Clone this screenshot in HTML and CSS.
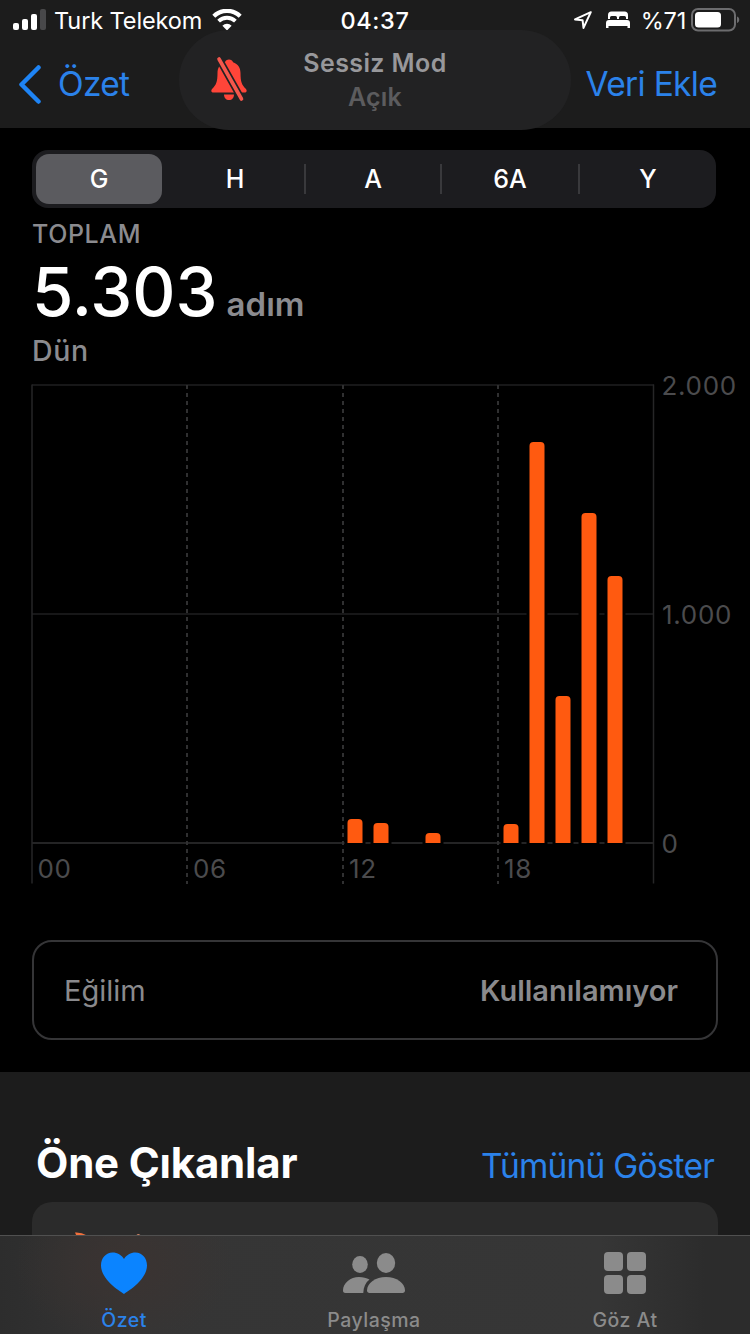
FILE: index.html
```
<!DOCTYPE html>
<html lang="tr">
<head>
    <meta charset="UTF-8">
    <meta name="viewport" content="width=device-width, initial-scale=1.0">
    <title>Adım Sayısı</title>
    <link rel="stylesheet" href="styles.css">
</head>
<body>
    <header class="header">
        <div class="status-bar">
            <div class="status-left">
                <svg class="signal" width="34" height="22" viewBox="0 0 34 22">
                    <rect x="1" y="14" width="6" height="7" rx="2" fill="#fff"/>
                    <rect x="10" y="10" width="6" height="11" rx="2" fill="#fff"/>
                    <rect x="19" y="5" width="6" height="16" rx="2" fill="#fff"/>
                    <rect x="28" y="0" width="6" height="21" rx="2" fill="#48484a"/>
                </svg>
                <span class="carrier">Turk Telekom</span>
                <svg class="wifi" width="30" height="22" viewBox="0 0 30 22">
                    <path d="M1.8 7.2a18.8 18.8 0 0 1 26.4 0" fill="none" stroke="#fff" stroke-width="4.200"/>
                    <path d="M6.6 12.2a12 12 0 0 1 16.8 0" fill="none" stroke="#fff" stroke-width="3.8"/>
                    <path d="M15 21.5l-4.6-4.7a6.4 6.4 0 0 1 9.2 0z" fill="#fff"/>
                </svg>
            </div>
            <span class="clock">04:37</span>
            <div class="status-right">
                <svg width="20" height="20" viewBox="0 0 20 20">
                    <path d="M17.8 2.2L2 9.4l7.6.9.9 7.6z" fill="none" stroke="#fff" stroke-width="2" stroke-linejoin="round"/>
                </svg>
                <svg class="bed" width="26" height="18" viewBox="0 0 26 18">
                    <path d="M3 8V4a3.500 3.500 0 0 1 3.500-3.500h13A3.500 3.500 0 0 1 23 4v4h-2V6.500A1.500 1.500 0 0 0 19.500 5h-4A1.500 1.500 0 0 0 14 6.500V8h-2V6.500A1.500 1.500 0 0 0 10.500 5h-4A1.500 1.500 0 0 0 5 6.500V8z" fill="#fff"/>
                    <path d="M1 17v-5a3 3 0 0 1 3-3h18a3 3 0 0 1 3 3v5h-2.500v-2h-19v2z" fill="#fff"/>
                </svg>
                <span class="percent">%71</span>
                <svg class="battery" width="49" height="24" viewBox="0 0 49 24">
                    <rect x="1" y="1" width="43" height="21.500" rx="6" fill="none" stroke="#6c6c6e" stroke-width="2"/>
                    <rect x="4" y="4" width="26" height="15.500" rx="3.500" fill="#fff"/>
                    <path d="M46 8.500c3 1 3 5.500 0 6.500z" fill="#6c6c6e"/>
                </svg>
            </div>
        </div>
        <nav class="nav">
            <a class="back">
                <svg width="24" height="40" viewBox="0 0 24 40">
                    <path d="M20.500 3.500L3.500 20.500l17 17" fill="none" stroke="#1e84f5" stroke-width="4.500" stroke-linecap="round" stroke-linejoin="round"/>
                </svg>
                <span>Özet</span>
            </a>
            <a class="add">Veri Ekle</a>
        </nav>
        <div class="banner">
            <svg class="bell" width="38" height="46" viewBox="0 0 38 46">
                <path d="M19 3.500c2 0 3.500 1 4 2.700 5 1.700 7.500 5.500 7.500 10.800 0 9 1.500 12 5 15.500 2 2 1.300 4-1 4H3.500c-2.300 0-3-2-1-4C6 29 7.500 26 7.500 17c0-5.300 2.500-9.100 7.500-10.800.5-1.700 2-2.700 4-2.700z" fill="#ff4539"/>
                <path d="M14 38.500h10c0 3.500-2 5.500-5 5.500s-5-2-5-5.500z" fill="#ff4539"/>
                <path d="M9 3l22.500 40" stroke="#222223" stroke-width="7"/>
                <path d="M9 3l22.500 40" stroke="#f4574c" stroke-width="3.600" stroke-linecap="round"/>
            </svg>
            <div class="banner-text">
                <div class="banner-title">Sessiz Mod</div>
                <div class="banner-state">Açık</div>
            </div>
        </div>
    </header>

    <main class="content">
        <div class="segments">
            <span class="segment active">G</span>
            <span class="segment second">H</span>
            <span class="segment divided">A</span>
            <span class="segment divided">6A</span>
            <span class="segment divided last">Y</span>
        </div>

        <section class="summary">
            <div class="summary-label">TOPLAM</div>
            <div class="summary-value"><span class="number">5.303</span><span class="unit">adım</span></div>
            <div class="summary-date">Dün</div>
        </section>

        <svg class="chart" width="750" height="520" viewBox="0 0 750 520">
            <g class="grid">
                <path d="M32 15h622M32 244h622"/>
                <path class="axis" d="M32 473h622"/>
                <path class="edge" d="M32 14.500v499M653.500 14.500v499"/>
                <path class="dashed" d="M187 15v499M343 15v499M498 15v499"/>
            </g>
            <g class="bars">
                <path d="M347.500 473v-20q0-4 4-4h7q4 0 4 4v20z"/>
                <path d="M373.500 473v-16q0-4 4-4h7q4 0 4 4v16z"/>
                <path d="M425.500 473v-6q0-4 4-4h7q4 0 4 4v6z"/>
                <path d="M503.500 473v-15q0-4 4-4h7q4 0 4 4v15z"/>
                <path d="M529.500 473v-397q0-4 4-4h7q4 0 4 4v397z"/>
                <path d="M555.500 473v-143q0-4 4-4h7q4 0 4 4v143z"/>
                <path d="M581.500 473v-326q0-4 4-4h7q4 0 4 4v326z"/>
                <path d="M607.500 473v-263q0-4 4-4h7q4 0 4 4v263z"/>
            </g>
            <g class="labels">
                <text x="661.500" y="25">2.000</text>
                <text x="662" y="254">1.000</text>
                <text x="661.500" y="483">0</text>
                <text x="37.500" y="508">00</text>
                <text x="193" y="508">06</text>
                <text x="349" y="508">12</text>
                <text x="504" y="508">18</text>
            </g>
        </svg>

        <div class="trend">
            <span class="trend-label">Eğilim</span>
            <span class="trend-value">Kullanılamıyor</span>
        </div>
    </main>

    <section class="highlights">
        <div class="highlights-head">
            <h2>Öne Çıkanlar</h2>
            <a class="show-all">Tümünü Göster</a>
        </div>
        <div class="card">
            <svg width="80" height="12" viewBox="0 0 80 12">
                <path d="M2 0.500q6-.5 12 3l1 4H5z" fill="#f2703c"/>
                <path d="M63 3.500q2-3 5 0v3h-5z" fill="#d98a68"/>
            </svg>
        </div>
    </section>

    <footer class="tab-bar">
        <a class="tab selected">
            <svg width="48" height="44" viewBox="0 0 48 44">
                <path d="M24 43C19 39.500 1 28.500 1 14.500 1 7 6 1.500 12.500 1.500c5 0 9 2.500 11.500 6.500 2.500-4 6.500-6.500 11.500-6.500C42 1.500 47 7 47 14.500 47 28.500 29 39.500 24 43z" fill="#0b84ff"/>
            </svg>
            <span>Özet</span>
        </a>
        <a class="tab">
            <svg width="64" height="44" viewBox="0 0 64 44">
                <ellipse cx="18" cy="13.500" rx="7.800" ry="8.500"/>
                <ellipse cx="44" cy="12" rx="9.200" ry="10"/>
                <path d="M1 39.500C1 32 8.500 26 17 26c4 0 7.500 1 10.500 2.500-4 3-6 7.500-6.200 13.500H3.500C1.500 42 1 41 1 39.500z"/>
                <path d="M25 39.500C25 32 33.500 26 44 26s19 6 19 13.500c0 1.500-1 2.500-2.500 2.500h-33c-1.500 0-2.500-1-2.500-2.500z"/>
            </svg>
            <span>Paylaşma</span>
        </a>
        <a class="tab">
            <svg width="42" height="44" viewBox="0 0 42 44">
                <rect x="0" y="1" width="19" height="19" rx="4"/>
                <rect x="23" y="1" width="19" height="19" rx="4"/>
                <rect x="0" y="24" width="19" height="19" rx="4"/>
                <rect x="23" y="24" width="19" height="19" rx="4"/>
            </svg>
            <span>Göz At</span>
        </a>
    </footer>
</body>
</html>
```
FILE: styles.css
```
body {
    margin: 0;
    height: 1334px;
    overflow: hidden;
    background-color: #000;
    color: #fff;
    font-family: Inter, 'Liberation Sans', sans-serif;
}

svg {
    display: block;
    flex: none;
}

.header {
    position: relative;
    height: 128px;
    background-color: #1c1c1c;
}

.status-bar {
    display: grid;
    grid-template-columns: 1fr auto 1fr;
    align-items: center;
    height: 40px;
    padding: 0 12px;
    font-size: 23.5px;
}

.status-left,
.status-right {
    display: flex;
    align-items: center;
}

.status-right {
    justify-content: flex-end;
}

.carrier,
.clock,
.percent {
    padding-top: 1px;
}

.carrier {
    margin: 0 10px 0 8px;
    letter-spacing: -0.1px;
}

.clock {
    font-weight: 500;
    letter-spacing: 0.6px;
}

.percent {
    letter-spacing: -0.2px;
}

.bed {
    margin: 0 10px 0 12px;
}

.battery {
    margin: 0 -2px 0 5px;
}

.nav {
    display: flex;
    justify-content: space-between;
    align-items: center;
    height: 88px;
    padding: 0 33px 0 18px;
    color: #2b82ea;
    font-size: 33.5px;
    letter-spacing: -0.7px;
}

.back {
    display: flex;
    align-items: center;
    gap: 16px;
}

/* Silent mode notification over the header */
.banner {
    position: absolute;
    left: 179px;
    top: 30px;
    width: 392px;
    height: 100px;
    border-radius: 50px;
    background-color: #222223;
}

.bell {
    position: absolute;
    left: 31px;
    top: 26px;
}

.banner-text {
    padding-top: 16px;
    text-align: center;
    font-size: 25px;
    font-weight: 600;
    line-height: 34px;
}

.banner-title {
    color: #98989b;
    letter-spacing: 0.4px;
}

.banner-state {
    color: #5c5c5e;
    letter-spacing: 0.2px;
}

.content {
    box-sizing: border-box;
    height: 944px;
    padding-top: 22px;
}

.segments {
    display: grid;
    grid-template-columns: 126px 142px 136px 138px 134px;
    align-items: center;
    box-sizing: border-box;
    width: 684px;
    height: 58px;
    margin: 0 0 0 32px;
    padding: 4px;
    border-radius: 16px;
    background-color: #1c1c1f;
}

.segment {
    height: 30px;
    line-height: 30px;
    text-align: center;
    font-size: 25px;
    font-weight: 500;
}

.segment.active {
    height: 50px;
    line-height: 50px;
    border-radius: 13px;
    background-color: #5b5b5f;
}

.segment.second {
    padding-left: 4px;
}

.segment.divided {
    border-left: 2px solid #39393c;
}

.segment.last {
    padding-left: 4px;
}

.summary {
    height: 162px;
    padding: 10px 0 0 32px;
    box-sizing: border-box;
    color: #8b8b8f;
}

.summary-label {
    font-size: 25px;
    font-weight: 500;
    letter-spacing: 0.6px;
    line-height: 33px;
}

.summary-value {
    display: flex;
    align-items: baseline;
    height: 82px;
    line-height: 82px;
}

.number {
    color: #fff;
    font-size: 67px;
    font-weight: 500;
}

.unit {
    margin-left: 9px;
    font-size: 33px;
    font-weight: 600;
}

.summary-date {
    font-size: 28.5px;
    font-weight: 500;
    letter-spacing: 0.7px;
    line-height: 36px;
}

.grid path {
    fill: none;
    stroke: #171718;
    stroke-width: 2;
}

.grid .axis {
    stroke: #242425;
}

.grid .edge {
    stroke: #262627;
    stroke-width: 1.5;
}

.grid .dashed {
    stroke: #303031;
    stroke-dasharray: 4 4;
}

.bars {
    fill: #ff5a10;
    stroke: #000;
    stroke-width: 6px;
    paint-order: stroke;
}

.labels {
    fill: #4b4b4d;
    font-size: 26px;
    letter-spacing: 0.7px;
}

.trend {
    display: flex;
    justify-content: space-between;
    align-items: center;
    box-sizing: border-box;
    width: 686px;
    height: 100px;
    margin: 50px 0 0 32px;
    padding: 0 38px 0 30px;
    border: 2px solid #353537;
    border-radius: 20px;
    color: #8a8a8d;
    font-size: 29px;
}

.trend-value {
    font-weight: 600;
}

.highlights {
    height: 262px;
    background-color: #1c1c1c;
}

.highlights-head {
    display: flex;
    justify-content: space-between;
    align-items: baseline;
    box-sizing: border-box;
    height: 130px;
    padding: 65px 36px 0 36px;
}

h2 {
    margin: 0;
    font-size: 42px;
    font-weight: 700;
    letter-spacing: -0.2px;
    line-height: 52px;
}

.show-all {
    color: #2b82ea;
    font-size: 33.5px;
    letter-spacing: -0.8px;
}

.card {
    height: 132px;
    margin: 0 32px;
    padding: 30px 0 0 41px;
    box-sizing: border-box;
    border-radius: 20px;
    background-color: #2b2b2b;
}

.tab-bar {
    position: fixed;
    left: 0;
    right: 0;
    bottom: 0;
    display: grid;
    grid-template-columns: 248px 252px 250px;
    box-sizing: border-box;
    height: 99px;
    border-top: 1px solid #505050;
    background: radial-gradient(ellipse 110px 80px at 124px 30px, #3b3331, rgba(59, 51, 49, 0)), linear-gradient(90deg, #2d2d2d, #353535 18%, #363636 80%, #2c2c2c 94%);
}

.tab {
    display: flex;
    flex-direction: column;
    align-items: center;
    gap: 13px;
    padding-top: 15px;
    color: #8b8b8b;
    fill: #8b8b8b;
    font-size: 19.5px;
    font-weight: 500;
    letter-spacing: 0.5px;
    line-height: 24px;
}

.selected {
    color: #2b82ea;
}
```
